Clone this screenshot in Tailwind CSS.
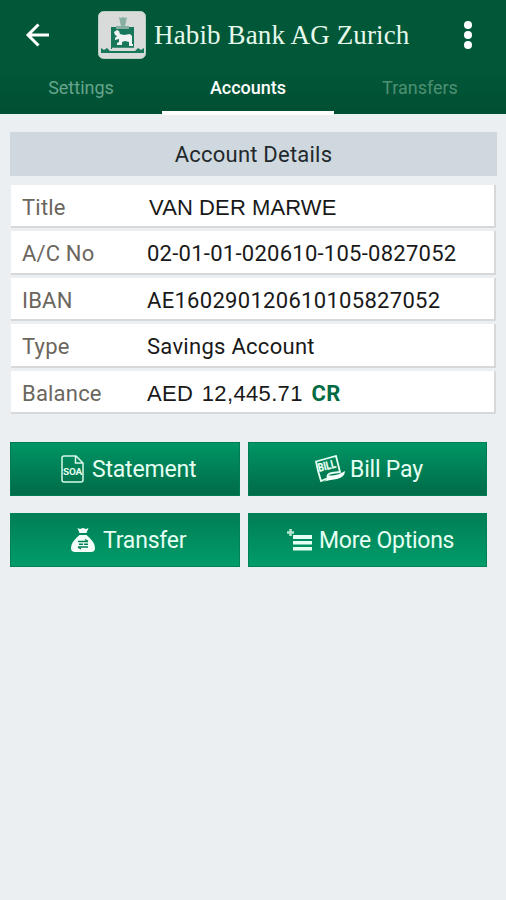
<!DOCTYPE html>
<html lang="en">
<head>
  <meta charset="UTF-8" />
  <meta name="viewport" content="width=device-width, initial-scale=1.0" />
  <title>Accounts - Habib Bank AG Zurich</title>
  <script src="https://cdn.jsdelivr.net/npm/@tailwindcss/browser@4"></script>
</head>
<body class="bg-[#ebeff2] h-[900px] overflow-hidden font-['Roboto',sans-serif]">
  <header class="h-[114px] bg-linear-to-b from-[#015838] from-60% to-[#014f33] text-white">
    <div class="flex items-center h-[69px] pl-[25px] pr-[34px]">
      <button class="w-[25px]" aria-label="Back">
        <svg class="block w-[25px] h-6" viewBox="0 0 25 24" fill="none" stroke="#fff" stroke-width="3"><path d="M13.500 1.500 3 12l10.500 10.500M2.500 12H24" /></svg>
      </button>
      <svg class="ml-12 w-12 h-12 shrink-0" viewBox="0 0 48 48">
        <rect x=".5" y=".5" width="47" height="47" rx="5" fill="#d9dbdb" stroke="#b8cfc4" />
        <g fill="#17775a">
          <path d="M13 16h23v22H13z" />
          <path d="M3 37l3 2 3-2 3 3h25l3-3 3 2 3-2v5H3z" />
        </g>
        <path d="M21 6l2 1 2-1 2 1 2-1-1 5-1 4h4v3H18v-3h5l-1-4z" fill="#86afa1" />
        <path d="M16 21l3-2 2 1 1 3 4 1 6-1 2 2v8h1v2h-4v-4l-4-1-3 1v3h-5v-2l2-1v-3l-4 1v-2l2-2-2-1z" fill="#eef2f0" />
        <path d="M14 37.500h22" stroke="#d9dbdb" stroke-width="1.500" />
      </svg>
      <h1 class="ml-2 flex-1 whitespace-nowrap font-['Liberation_Serif',serif] text-[27px] leading-8 tracking-[0.140px] text-[#e6f8ec]">Habib Bank AG Zurich</h1>
      <button class="flex flex-col gap-[2px]" aria-label="More">
        <span class="size-2 rounded-full bg-white"></span>
        <span class="size-2 rounded-full bg-white"></span>
        <span class="size-2 rounded-full bg-white"></span>
      </button>
    </div>
    <nav class="flex h-[46px] text-[18px] leading-[37px] text-center">
      <a class="w-[162px] text-[#66a58b]">Settings</a>
      <a class="w-[172px] border-b-4 border-white font-medium">Accounts</a>
      <a class="w-[172px] text-[#4e9073]">Transfers</a>
    </nav>
  </header>

  <main class="pt-[18px] pl-[10px]">
    <h2 class="w-[487px] h-11 bg-[#ced8de] text-center text-[22px] leading-[46px] tracking-[0.220px] text-[#22282c]">Account Details</h2>

    <dl class="mt-[9px] ml-[1px] w-[485px] flex flex-col gap-[3px] text-[22px] leading-[45px] text-[#191919]">
      <div class="flex h-[43.4px] bg-white border-b-2 border-r-2 border-[#d6d8d9] pl-[11px]">
        <dt class="w-[127px] tracking-[0.2px] text-[#6b665e]">Title</dt>
        <dd class="font-['Liberation_Sans',sans-serif] tracking-[0.1px]">VAN DER MARWE</dd>
      </div>
      <div class="flex h-[43.4px] bg-white border-b-2 border-r-2 border-[#d6d8d9] pl-[11px]">
        <dt class="w-[125px] tracking-[0.150px] text-[#6b665e]">A/C No</dt>
        <dd class="tracking-[0.260px]">02-01-01-020610-105-0827052</dd>
      </div>
      <div class="flex h-[43.4px] bg-white border-b-2 border-r-2 border-[#d6d8d9] pl-[11px]">
        <dt class="w-[125px] tracking-[0.2px] text-[#6b665e]">IBAN</dt>
        <dd class="tracking-[0.3px]">AE160290120610105827052</dd>
      </div>
      <div class="flex h-[43.4px] bg-white border-b-2 border-r-2 border-[#d6d8d9] pl-[11px]">
        <dt class="w-[125px] tracking-[0.2px] text-[#6b665e]">Type</dt>
        <dd class="tracking-[0.280px]">Savings Account</dd>
      </div>
      <div class="flex h-[43.4px] bg-white border-b-2 border-r-2 border-[#d6d8d9] pl-[11px]">
        <dt class="w-[125px] tracking-[0.2px] text-[#6b665e]">Balance</dt>
        <dd class="tracking-[0.350px]"><span class="font-['Liberation_Sans',sans-serif] [word-spacing:2px]">AED 12,445.71</span> <b class="text-[#006b43] tracking-[0.2px] ml-[3px]">CR</b></dd>
      </div>
    </dl>

    <div class="mt-7 grid grid-cols-[230px_239px] gap-x-2 gap-y-[17px] text-[23px] tracking-[-0.2px] text-[#e5fff2]">
      <button class="flex items-center h-[54px] pl-[50px] bg-linear-to-b from-[#009564] to-[#006b48] border border-[#007c54]">
        <svg class="w-[23px] h-7" viewBox="0 0 23 28" fill="none" stroke="#d9f7e9" stroke-width="1.500">
          <path d="M3 1h12l7 7v17q0 2-2 2H3q-2 0-2-2V3q0-2 2-2zM14.500 1v7H22" />
          <text x="2" y="20" textLength="19" lengthAdjust="spacingAndGlyphs" font-family="Roboto" font-size="9" font-weight="700" fill="#e5fff2" stroke="none">SOA</text>
        </svg>
        <span class="ml-2 pt-[2px]">Statement</span>
      </button>
      <button class="flex items-center h-[54px] pl-[66px] bg-linear-to-b from-[#009564] to-[#006b48] border border-[#007c54]">
        <svg class="w-[31px] h-7" viewBox="0 0 31 28">
          <path d="M1 6.500 21 1l4 16-8 1q-6 1-4 5l-7 3Q3 17 1 6.500z" fill="none" stroke="#e5fff2" stroke-width="1.800" />
          <path d="M12 20q8 2 18-4 0 6-8 8-8 1-15 3 6-1 5-7z" fill="#f3fff8" />
          <text transform="translate(4 17) rotate(-14)" textLength="18" lengthAdjust="spacingAndGlyphs" font-family="Roboto" font-size="12" font-weight="900" fill="#e5fff2">BILL</text>
        </svg>
        <span class="ml-[4px] pt-[2px]">Bill Pay</span>
      </button>
      <button class="flex items-center h-[54px] pl-[60px] bg-linear-to-b from-[#007e56] to-[#009c69] border border-[#008159]">
        <svg class="w-6 h-[26px]" viewBox="0 0 24 26">
          <path d="M6.500 1 9 2l3-1 3 1 2.500-1-2 5h-7z" fill="#f3fff8" />
          <path d="M8.500 8h7q8.500 7 8.500 13 0 4-4 4H4q-4 0-4-4 0-6 8.500-13z" fill="#f3fff8" />
          <path d="M7 14.500h10M7 20h10" stroke="#007e56" stroke-width="1.500" />
          <path d="M8 17.300h9M14 12.500l3 2M7 20l3 2" stroke="#007e56" stroke-width="1.500" stroke-dasharray="4 1" />
        </svg>
        <span class="ml-[8px] pt-[2px]">Transfer</span>
      </button>
      <button class="flex items-center h-[54px] pl-[38px] bg-linear-to-b from-[#007e56] to-[#009c69] border border-[#008159]">
        <svg class="w-[26px] h-[22px]" viewBox="0 0 26 22" fill="#e5fff2">
          <path d="M6 6h19v4H6zM6 12h19v3.500H6zM6 18h19v3.500H6z" />
          <path d="M3.500 0v7M0 3.500h7" stroke="#b5e5cf" stroke-width="2.500" />
        </svg>
        <span class="ml-[6px] pt-[2px] tracking-[-0.250px]">More Options</span>
      </button>
    </div>
  </main>
</body>
</html>
